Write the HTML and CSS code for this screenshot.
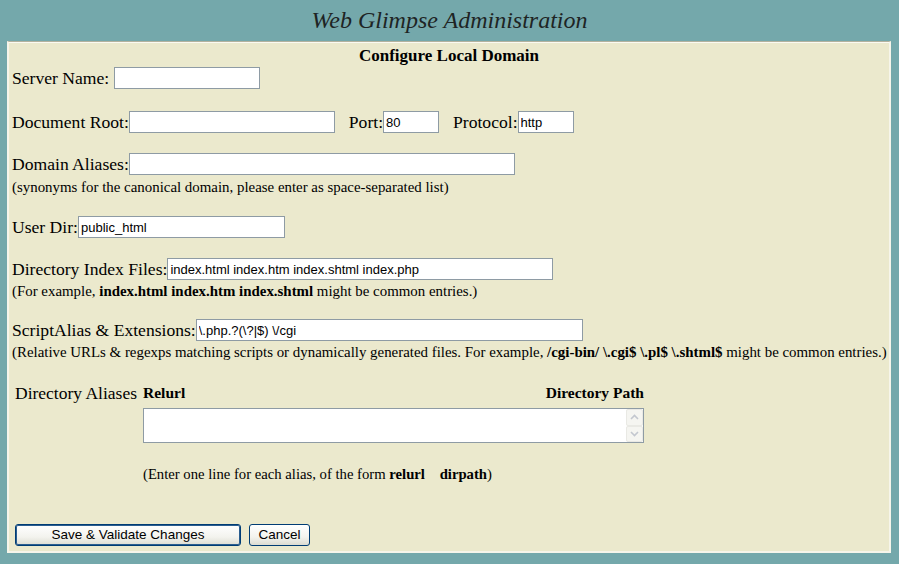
FILE: index.html
```html
<!DOCTYPE html>
<html>
<head>
<meta charset="utf-8">
<title>Web Glimpse Administration</title>
<link rel="stylesheet" href="styles.css">
</head>
<body>
<h1 class="title">Web Glimpse Administration</h1>
<form class="panel">
  <div class="heading">Configure Local Domain</div>

  <div class="row r-server">
    <span class="label">Server Name:&nbsp;</span><input class="field w-server" type="text" value="">
  </div>

  <div class="row r-doc">
    <span class="label">Document Root:</span><input class="field w-doc" type="text" value="">
    <span class="label gap">Port:</span><input class="field w-port" type="text" value="80">
    <span class="label gap">Protocol:</span><input class="field w-port" type="text" value="http">
  </div>

  <div class="row r-alias">
    <span class="label">Domain Aliases:</span><input class="field w-alias" type="text" value="">
  </div>
  <div class="help">(synonyms for the canonical domain, please enter as space-separated list)</div>

  <div class="row r-user">
    <span class="label">User Dir:</span><input class="field w-user" type="text" value="public_html">
  </div>

  <div class="row r-index">
    <span class="label">Directory Index Files:</span><input class="field w-index" type="text" value="index.html index.htm index.shtml index.php">
  </div>
  <div class="help">(For example, <b>index.html index.htm index.shtml</b> might be common entries.)</div>

  <div class="row r-script">
    <span class="label">ScriptAlias &amp; Extensions:</span><input class="field w-script" type="text" value="\.php.?(\?|$) \/cgi">
  </div>
  <div class="help">(Relative URLs &amp; regexps matching scripts or dynamically generated files. For example, <b>/cgi-bin/ \.cgi$ \.pl$ \.shtml$</b> might be common entries.)</div>

  <div class="aliases">
    <div class="alias-label">Directory Aliases</div>
    <div class="alias-body">
      <div class="alias-head"><b>Relurl</b><b>Directory Path</b></div>
      <div class="area">
        <textarea class="area-text"></textarea>
        <div class="scrollbar">
          <div class="sb-btn"><svg width="9" height="6" viewBox="0 0 9 6"><path d="M1 5 L4.5 1.5 L8 5" fill="none" stroke="#c3c7cf" stroke-width="1.6"/></svg></div>
          <div class="sb-btn"><svg width="9" height="6" viewBox="0 0 9 6"><path d="M1 1 L4.5 4.5 L8 1" fill="none" stroke="#c3c7cf" stroke-width="1.6"/></svg></div>
        </div>
      </div>
      <div class="alias-help">(Enter one line for each alias, of the form <b>relurl</b> &nbsp;&nbsp; <b>dirpath</b>)</div>
    </div>
  </div>

  <div class="buttons">
    <button type="button" class="btn btn-default">Save &amp; Validate Changes</button>
    <button type="button" class="btn btn-cancel">Cancel</button>
  </div>
</form>
</body>
</html>
```
FILE: styles.css
```css
html, body {
  margin: 0;
  padding: 0;
}
body {
  background: #74a8ab;
  font-family: "Liberation Serif", "Times New Roman", serif;
  color: #000;
  width: 899px;
  height: 564px;
  overflow: hidden;
}
.title {
  margin: 0;
  height: 41px;
  line-height: 41px;
  text-align: center;
  font-size: 24px;
  font-style: italic;
  font-weight: normal;
  color: #1e2424;
}
.panel {
  display: block;
  margin: 0 8px 0 7px;
  background: #ebe9cd;
  border-top: 1px solid #b3b29e;
  border-left: 2px solid #f6f5ea;
  border-right: 2px solid #f6f5ea;
  border-bottom: 2px solid #f6f5ea;
  box-shadow: inset 0 1px 0 #fbfaf2;
  padding: 0 0 3px 3px;
  height: 512px;
  box-sizing: border-box;
}
.heading {
  text-align: center;
  font-weight: bold;
  font-size: 17px;
  line-height: 18px;
  padding-top: 5px;
  margin-right: 3px;
}
.row {
  display: flex;
  align-items: center;
  height: 22px;
  font-size: 17.6px;
}
.label {
  white-space: pre;
}
.label.gap {
  margin-left: 14px;
}
.field {
  box-sizing: border-box;
  height: 22px;
  border: 1px solid #8e9ba4;
  background: #fff;
  font-family: "Liberation Sans", Arial, sans-serif;
  font-size: 13px;
  padding: 1px 2px 0;
  margin: 0;
  color: #000;
}
.w-server { width: 146px; }
.w-doc { width: 206px; }
.w-port { width: 56px; }
.w-alias { width: 386px; }
.w-user { width: 207px; }
.w-index { width: 386px; }
.w-script { width: 387px; }

.r-server { margin-top: 2px; }
.r-doc { margin-top: 22px; }
.r-alias { margin-top: 20px; }
.r-user { margin-top: 21px; }
.r-index { margin-top: 20px; }
.r-script { margin-top: 20px; }

.help {
  font-size: 14.9px;
  line-height: 16px;
  margin-top: 4px;
  white-space: nowrap;
}
.r-index + .help, .r-script + .help { margin-top: 3px; }

.aliases {
  display: flex;
  margin-top: 25px;
}
.alias-label {
  font-size: 17.5px;
  line-height: 16px;
  width: 131px;
  padding-left: 3px;
  box-sizing: border-box;
  white-space: nowrap;
}
.alias-body {
  width: 501px;
}
.alias-head {
  display: flex;
  justify-content: space-between;
  font-size: 15.5px;
  line-height: 16px;
}
.area {
  display: flex;
  margin-top: 7px;
  height: 35px;
  box-sizing: border-box;
  border: 1px solid #8e9ba4;
  background: #fff;
}
.area-text {
  flex: 1;
  border: 0;
  margin: 0;
  padding: 0;
  resize: none;
  outline: none;
  background: #fff;
}
.scrollbar {
  width: 17px;
  display: flex;
  flex-direction: column;
  background: #fdfdfa;
}
.sb-btn {
  flex: 1;
  display: flex;
  align-items: center;
  justify-content: center;
  box-sizing: border-box;
  border: 1px solid #e9e9e4;
  border-radius: 2px;
  background: #f5f5f1;
}
.alias-help {
  font-size: 14.7px;
  line-height: 16px;
  margin-top: 23px;
  white-space: nowrap;
}
.buttons {
  display: flex;
  gap: 8px;
  margin-top: 42px;
  padding-left: 3px;
}
.btn {
  box-sizing: border-box;
  height: 22px;
  margin: 0;
  padding: 0 0 1px;
  font-family: "Liberation Sans", Arial, sans-serif;
  font-size: 13.5px;
  color: #000;
  border: 1px solid #003c74;
  border-radius: 3px;
  background: linear-gradient(#ffffff, #f3f3ee 60%, #dcdcd2);
}
.btn-default {
  width: 226px;
  box-shadow: inset 0 0 0 1px #2a5d8f;
}
.btn-cancel {
  width: 61px;
}
```
